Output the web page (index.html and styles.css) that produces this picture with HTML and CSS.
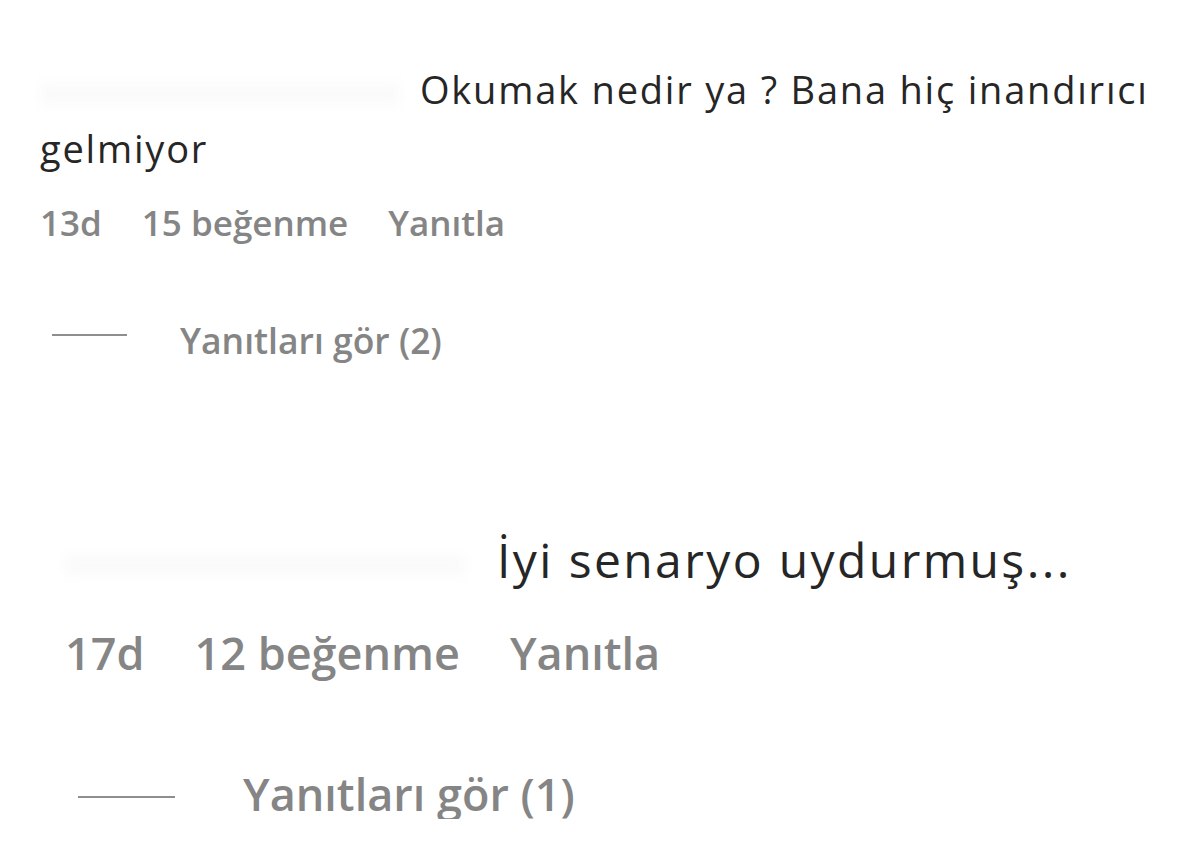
FILE: index.html
```html
<!DOCTYPE html>
<html lang="tr">
  <head>
    <meta charset="UTF-8" />
    <title>Yorumlar</title>
    <link rel="stylesheet" href="styles.css">
  </head>
  <body>
    <div class="comment first">
      <p class="comment-text"><span class="user-blur"></span>Okumak nedir ya ? Bana hiç inandırıcı gelmiyor</p>
      <div class="meta">
        <span>13d</span>
        <span>15 beğenme</span>
        <span>Yanıtla</span>
      </div>
      <div class="replies">
        <span class="replies-line"></span>
        <span>Yanıtları gör (2)</span>
      </div>
    </div>

    <div class="comment second">
      <p class="comment-text"><span class="user-blur"></span>İyi senaryo uydurmuş...</p>
      <div class="meta">
        <span>17d</span>
        <span>12 beğenme</span>
        <span>Yanıtla</span>
      </div>
      <div class="replies">
        <span class="replies-line"></span>
        <span>Yanıtları gör (1)</span>
      </div>
    </div>
  </body>
</html>
```

FILE: styles.css
```css
body {
  margin: 0;
  background: #fff;
  font-family: "Open Sans", "Noto Sans", sans-serif;
  color: #262626;
}
.comment-text {
  margin: 0;
}
.user-blur {
  display: inline-block;
  vertical-align: middle;
  height: 20px;
  background: #fafafa;
  filter: blur(6px);
}
.meta {
  display: flex;
  color: #858585;
  font-weight: 600;
}
.replies {
  display: flex;
  align-items: center;
  color: #858585;
  font-weight: 600;
}
.replies-line {
  display: block;
  height: 2px;
  background: #8e8e8e;
}

/* first comment */
.first {
  padding: 60px 35px 0 40px;
}
.first .comment-text {
  font-size: 38px;
  line-height: 59px;
  letter-spacing: 1.8px;
}
.first .user-blur {
  width: 360px;
  margin-right: 20px;
}
.first .meta {
  margin-top: 25px;
  font-size: 35px;
  line-height: 40px;
  gap: 40px;
}
.first .replies {
  margin-top: 77px;
  font-size: 35.5px;
  line-height: 40px;
  gap: 53px;
}
.first .replies-line {
  width: 75px;
  margin-left: 12px;
  margin-bottom: 10px;
}

/* second comment */
.second {
  padding: 0 0 0 65px;
  margin-top: 170px;
}
.second .comment-text {
  font-size: 48px;
  line-height: 60px;
  letter-spacing: 2.4px;
}
.second .user-blur {
  width: 400px;
  margin-right: 32px;
}
.second .meta {
  margin-top: 38px;
  font-size: 45px;
  line-height: 50px;
  gap: 50px;
}
.second .replies {
  margin-top: 91px;
  font-size: 45px;
  line-height: 50px;
  gap: 68px;
}
.second .replies-line {
  width: 97px;
  margin-left: 13px;
  margin-top: 6px;
}
```
